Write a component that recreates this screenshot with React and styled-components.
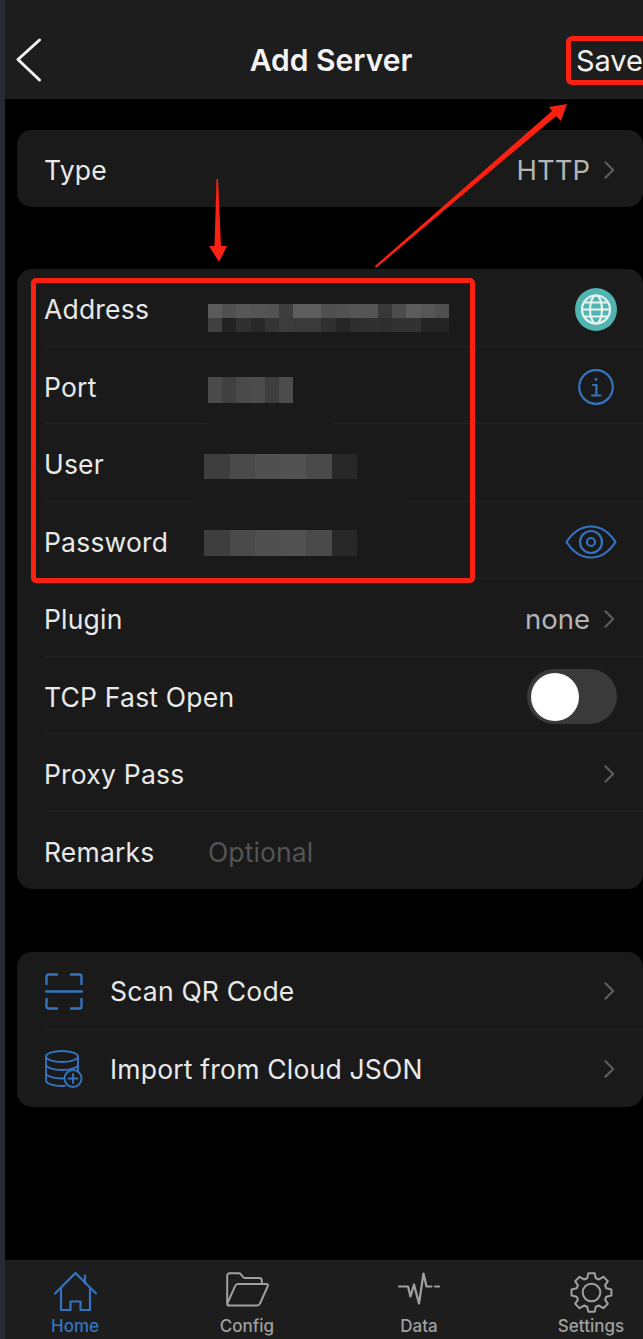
import React from 'react'
import styled, { createGlobalStyle } from 'styled-components'

const BLUE = '#3473c0'
const GRAY = '#a0a0a0'

const GlobalStyle = createGlobalStyle`
  html, body {
    margin: 0;
    padding: 0;
    background: #000;
    overflow: hidden;
  }
  * { box-sizing: border-box; }
`

const addressCells = [
  ['#5a5a5a', '#505050', '#565656', '#545454', '#525252', '#3e3e3e', '#5e5e5e', '#5e5e5e', '#505050', '#525252', '#545454', '#545454', '#383838', '#4c4c4c', '#5c5c5c', '#565656', '#505050'],
  ['#404040', '#222222', '#303030', '#282828', '#343434', '#3c3c3c', '#3a3a3a', '#3a3a3a', '#303030', '#262626', '#2e2e2e', '#303030', '#2e2e2e', '#323232', '#323232', '#242424', '#242424'],
]
const portCells = [['#4a4a4a', '#404040', '#4a4a4a', '#4c4c4c', '#3e3e3e', '#4c4c4c']]
const secretCells = [['#3e3e3e', '#4a4a4a', '#505050', '#525252', '#4a4a4a', '#282828']]

// 8 tooth gear outline, centred on 21.5/20.5
const gearPath = (() => {
  const pts = []
  const teeth = 8
  for (let i = 0; i < teeth; i++) {
    const a = (i / teeth) * Math.PI * 2 - Math.PI / 2
    const step = (Math.PI * 2) / teeth
    const add = (r, d) => pts.push([21.5 + r * Math.cos(a + d * step), 20.5 + r * Math.sin(a + d * step) * 0.96])
    add(15.5, -0.36)
    add(20.2, -0.2)
    add(20.2, 0.2)
    add(15.5, 0.36)
  }
  return 'M' + pts.map((p) => p[0].toFixed(2) + ' ' + p[1].toFixed(2)).join('L') + 'Z'
})()

const Chevron = () => (
  <ChevronIcon viewBox="0 0 12 20" fill="none" stroke="#5f5f5f" strokeWidth="2.2" strokeLinecap="round" strokeLinejoin="round">
    <path d="M1.5 1.5 10 10 1.5 18.5" />
  </ChevronIcon>
)

const Mosaic = ({ rows, cell, height, offset, left }) => (
  <MosaicBox $offset={offset} $left={left}>
    {rows.map((row, i) => (
      <MosaicRow key={i}>
        {row.map((c, j) => (
          <MosaicCell key={j} $w={cell} $h={height} $c={c} />
        ))}
      </MosaicRow>
    ))}
  </MosaicBox>
)

const GlobeIcon = () => (
  <svg width="42" height="43" viewBox="0 0 42 43" fill="none">
    <ellipse cx="21" cy="21.5" rx="21" ry="21.5" fill="#52b4b0" />
    <g stroke="#e8f2f1" strokeWidth="2.2">
      <circle cx="21" cy="21.5" r="14" />
      <ellipse cx="21" cy="21.5" rx="6" ry="14" />
      <path d="M7 21.5h28M9.5 14.5h23M9.5 28.5h23" />
    </g>
  </svg>
)

const InfoIcon = () => (
  <svg width="36" height="36" viewBox="0 0 36 36" fill="none" stroke={BLUE} strokeWidth="2.2" strokeLinecap="round">
    <circle cx="18" cy="18" r="16.8" />
    <circle cx="18" cy="10.5" r="1.4" fill={BLUE} stroke="none" />
    <path d="M15 16h3.4v10M14 26.5h8.5" />
  </svg>
)

const EyeIcon = () => (
  <svg width="52" height="34" viewBox="0 0 52 34" fill="none" stroke={BLUE} strokeWidth="2.2">
    <path d="M1.5 17C8 7 16 1.5 26 1.5S44 7 50.5 17C44 27 36 32.5 26 32.5S8 27 1.5 17Z" strokeLinejoin="round" />
    <circle cx="26" cy="17" r="11" />
    <circle cx="26" cy="17" r="4" />
  </svg>
)

const ScanIcon = () => (
  <svg width="38" height="37" viewBox="0 0 38 37" fill="none" stroke={BLUE} strokeWidth="2.4" strokeLinecap="round" strokeLinejoin="round">
    <path d="M12 1.5H3.5a2 2 0 0 0-2 2V11M26 1.5h8.5a2 2 0 0 1 2 2V11M12 35.5H3.5a2 2 0 0 1-2-2V26M26 35.5h8.5a2 2 0 0 0 2-2V26" />
    <path d="M1 18.5h36" />
  </svg>
)

const DatabaseIcon = () => (
  <svg width="38" height="38" viewBox="0 0 38 38" fill="none" stroke={BLUE} strokeWidth="1.9" strokeLinecap="round">
    <ellipse cx="17" cy="6.5" rx="16" ry="5.5" />
    <path d="M1 6.5v24c0 3 7 5.5 16 5.5 1 0 2 0 3-.1" />
    <path d="M33 6.5v14" />
    <path d="M1 14.5c0 3 7 5.5 16 5.5s16-2.5 16-5.5" />
    <path d="M1 23c0 3 7 5.5 16 5.5 1 0 2 0 3-.1" />
    <circle cx="28" cy="28.5" r="8.5" fill="#1a1a1a" />
    <path d="M28 24v9M23.5 28.5h9" />
  </svg>
)

const HomeIcon = () => (
  <svg width="43" height="40" viewBox="0 0 43 40" fill="none" stroke={BLUE} strokeWidth="2.2" strokeLinecap="round" strokeLinejoin="round">
    <path d="M1 21.5 21.5 1 42 21.5" />
    <path d="M7 16v22h9.5V29.5h10V38H36V16" />
    <path d="M31 11.5V3.5" />
  </svg>
)

const FolderIcon = () => (
  <svg width="43" height="35" viewBox="0 0 43 35" fill="none" stroke={GRAY} strokeWidth="2" strokeLinecap="round" strokeLinejoin="round">
    <path d="M3 33.5c-1 0-1.800-.8-1.800-1.800V3.500c0-1.200 1-2.200 2.200-2.200h9.600c.8 0 1.500.4 2 1l2 2.700c.4.600 1 .9 1.800.9h14.500c1.400 0 2.500 1.100 2.500 2.500v3" />
    <path d="M3 33.5h28c1.500 0 2.500-.7 3-2l7.800-17.300c.5-1.200-.2-2.300-1.500-2.300H12c-1.300 0-2.300.7-2.800 1.900L1.500 31" />
  </svg>
)

const DataIcon = () => (
  <svg width="42" height="33" viewBox="0 0 42 33" fill="none" stroke={GRAY} strokeWidth="2.2" strokeLinecap="round" strokeLinejoin="round">
    <path d="M1 14.500h9l2.500 10 3.500-12 5 19 4.500-30 3 13h5" />
    <path d="M37 14.500h4" />
  </svg>
)

const GearIcon = () => (
  <svg width="43" height="41" viewBox="0 0 43 41" fill="none" stroke={GRAY} strokeWidth="2" strokeLinejoin="round">
    <path d={gearPath} />
    <circle cx="21.5" cy="20.5" r="8.8" />
  </svg>
)

const App = () => {
  return (
    <Page>
      <GlobalStyle />
      <Strip />
      <Main>
        <Header>
          <BackIcon viewBox="0 0 26 44" fill="none" stroke="#f2f2f2" strokeWidth="3" strokeLinecap="round" strokeLinejoin="round">
            <path d="M23.5 2 2 21.5 23.5 42" />
          </BackIcon>
          <Title>Add Server</Title>
          <SaveText>Save</SaveText>
        </Header>

        <Content>
          <Card>
            <Row $last>
              <Label>Type</Label>
              <Trailing>
                <RightValue>HTTP</RightValue>
                <Chevron />
              </Trailing>
            </Row>
          </Card>

          <Card>
            <Row>
              <Label>Address</Label>
              <Mosaic rows={addressCells} cell={14.18} height={14} offset={18} />
              <RightSlot><GlobeIcon /></RightSlot>
            </Row>
            <Row>
              <Label>Port</Label>
              <Mosaic rows={portCells} cell={14.18} height={26} offset={6} />
              <RightSlot $nudge={3}><InfoIcon /></RightSlot>
              <Patch $left={162} $width={127} />
            </Row>
            <Row>
              <Label>User</Label>
              <Mosaic rows={secretCells} cell={25.5} height={25} offset={4} left={-4} />
              <Patch $left={148} $width={215} />
            </Row>
            <Row>
              <Label>Password</Label>
              <Mosaic rows={secretCells} cell={25.5} height={26} offset={3} left={-4} />
              <RightSlot><EyeIcon /></RightSlot>
            </Row>
            <Row>
              <Label>Plugin</Label>
              <Trailing>
                <RightValue>none</RightValue>
                <Chevron />
              </Trailing>
            </Row>
            <Row>
              <Label>TCP Fast Open</Label>
              <Toggle><Knob /></Toggle>
            </Row>
            <Row>
              <Label>Proxy Pass</Label>
              <Trailing><Chevron /></Trailing>
            </Row>
            <Row $last>
              <Label>Remarks</Label>
              <Placeholder>Optional</Placeholder>
            </Row>
          </Card>

          <Card>
            <Row $tight>
              <IconSlot><ScanIcon /></IconSlot>
              <ActionLabel>Scan QR Code</ActionLabel>
              <Trailing><Chevron /></Trailing>
            </Row>
            <Row $tight $last>
              <IconSlot><DatabaseIcon /></IconSlot>
              <ActionLabel>Import from Cloud JSON</ActionLabel>
              <Trailing><Chevron /></Trailing>
            </Row>
          </Card>
        </Content>

        <TabBar>
          <Tab $active><HomeIcon /><TabLabel>Home</TabLabel></Tab>
          <Tab><FolderIcon /><TabLabel>Config</TabLabel></Tab>
          <Tab><DataIcon /><TabLabel>Data</TabLabel></Tab>
          <Tab><GearIcon /><TabLabel>Settings</TabLabel></Tab>
        </TabBar>
      </Main>

      {/* annotations drawn on top of the screenshot */}
      <SaveBox />
      <FieldsBox />
      <Arrows viewBox="0 0 643 1339" fill="#fb2112">
        <polygon points="216.5,179 218,179 221,246 227,246 219,262 209,246 214.5,246" />
        <polygon points="375,266 376,268 556,116 561,121 567,104 549,107 552,111" />
      </Arrows>
    </Page>
  )
}

const Page = styled.div`
  position: relative;
  display: flex;
  width: 643px;
  height: 1339px;
  overflow: hidden;
  background: #000;
  font-family: Inter, "Liberation Sans", sans-serif;
  color: #e9e9e9;
`

const Strip = styled.div`
  width: 5px;
  flex-shrink: 0;
  background: #292b33;
`

const Main = styled.div`
  flex: 1;
  min-width: 0;
  display: flex;
  flex-direction: column;
`

const Header = styled.header`
  height: 99px;
  flex-shrink: 0;
  display: grid;
  grid-template-columns: 1fr auto 1fr;
  align-items: center;
  padding: 22px 0 0 14px;
  background: #1d1d1d;
  border-bottom: 1px solid #212121;
`

const BackIcon = styled.svg`
  width: 26px;
  height: 44px;
  margin-left: -3px;
`

const Title = styled.div`
  font-size: 30px;
  font-weight: 600;
  color: #f4f4f4;
`

const SaveText = styled.div`
  justify-self: end;
  font-size: 29px;
  color: #f0f0f0;
`

const Content = styled.main`
  flex: 1;
  display: flex;
  flex-direction: column;
  gap: 62px;
  padding: 30.5px 0 0 12px;
`

const Card = styled.section`
  background: #1a1a1a;
  border-radius: 15px;
  padding-left: 28px;
  &:last-child {
    margin-top: 1px;
  }
`

const Row = styled.div`
  position: relative;
  height: 77.5px;
  display: flex;
  align-items: center;
  padding: ${(p) => (p.$tight ? '2px' : '4px')} 26px 0 0;
  border-bottom: ${(p) => (p.$last ? 'none' : '1px solid #242424')};
`

const Label = styled.div`
  width: 163px;
  flex-shrink: 0;
  margin-left: -1px;
  margin-right: 1px;
  white-space: nowrap;
  font-size: 26.5px;
  letter-spacing: 0.2px;
  color: #e9e9e9;
`

const Trailing = styled.div`
  margin-left: auto;
  margin-right: 2px;
  display: flex;
  align-items: center;
  gap: 14px;
`

const RightValue = styled.div`
  font-size: 27.5px;
  color: #b4b4b4;
`

const Placeholder = styled.div`
  font-size: 26.5px;
  letter-spacing: 0.1px;
  color: #545454;
`

const ChevronIcon = styled.svg`
  width: 11px;
  height: 20px;
  flex-shrink: 0;
`

const RightSlot = styled.div`
  margin-left: auto;
  margin-right: ${(p) => p.$nudge || 0}px;
  display: flex;
`

const MosaicBox = styled.div`
  display: flex;
  flex-direction: column;
  margin-top: ${(p) => p.$offset}px;
  margin-left: ${(p) => p.$left || 0}px;
`

const MosaicRow = styled.div`
  display: flex;
`

const MosaicCell = styled.div`
  width: ${(p) => p.$w}px;
  height: ${(p) => p.$h}px;
  background: ${(p) => p.$c};
`

const Patch = styled.div`
  position: absolute;
  left: ${(p) => p.$left}px;
  bottom: -1px;
  width: ${(p) => p.$width}px;
  height: 1px;
  background: #1a1a1a;
`

const Toggle = styled.div`
  margin-left: auto;
  width: 90px;
  height: 55px;
  padding: 4px;
  border-radius: 28px;
  background: #3a3a3a;
`

const Knob = styled.div`
  width: 48px;
  height: 48px;
  border-radius: 50%;
  background: #fff;
`

const IconSlot = styled.div`
  width: 65px;
  flex-shrink: 0;
  display: flex;
`

const ActionLabel = styled.div`
  font-size: 26.5px;
  letter-spacing: 0.2px;
  color: #e9e9e9;
`

const TabBar = styled.nav`
  height: 79px;
  flex-shrink: 0;
  display: flex;
  justify-content: space-between;
  padding: 11px 2px 0 20px;
  background: #1d1d1d;
  border-top: 1px solid #222222;
`

const Tab = styled.div`
  width: 100px;
  height: 64px;
  display: flex;
  flex-direction: column;
  align-items: center;
  justify-content: space-between;
  color: ${(p) => (p.$active ? BLUE : GRAY)};
`

const TabLabel = styled.div`
  font-size: 17px;
  line-height: 20px;
  font-weight: 500;
`

const SaveBox = styled.div`
  position: absolute;
  left: 566px;
  top: 36px;
  width: 90px;
  height: 49px;
  border: 5px solid #fb2112;
  border-radius: 6px;
`

const FieldsBox = styled.div`
  position: absolute;
  left: 31px;
  top: 278px;
  width: 444px;
  height: 305px;
  border: 5px solid #fb2112;
  border-radius: 5px;
`

const Arrows = styled.svg`
  position: absolute;
  inset: 0;
  width: 643px;
  height: 1339px;
  pointer-events: none;
`

export default App
